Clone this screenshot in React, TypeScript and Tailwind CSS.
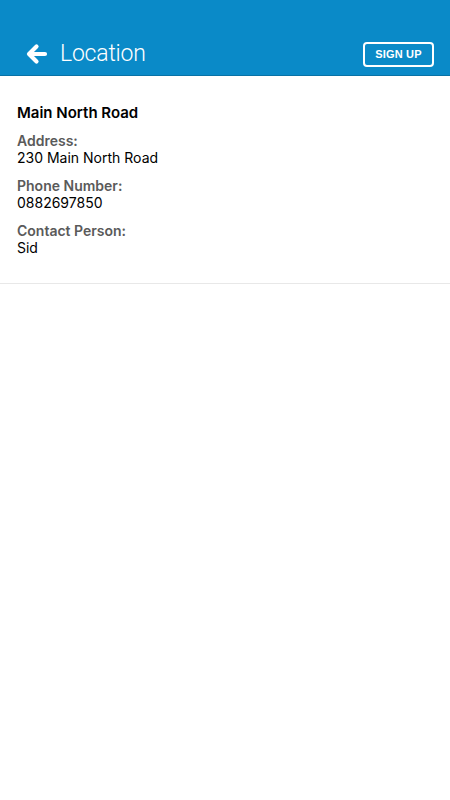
import React from "react";

export default function App() {
  return (
    <div className="w-[450px] h-[800px] bg-white" style={{ fontFamily: 'Inter, "Liberation Sans", Arial, sans-serif' }}>
      <div className="h-[76px] bg-[#0a8ac8] border-b border-[#0872a6] flex items-end pb-[5px] px-[16px]">
        <div className="flex items-center flex-1">
          <svg width="24" height="24" viewBox="0 0 24 24" className="ml-[9px] mr-[11px]">
            <path d="M20 12H5M11.5 4.5L4 12l7.5 7.5" fill="none" stroke="white" strokeWidth="4.2" strokeLinecap="round" strokeLinejoin="round" />
          </svg>
          <span className="text-white text-[23px] leading-[32px] tracking-[-0.2px]" style={{ fontFamily: 'Roboto, "Liberation Sans", sans-serif', fontWeight: 300 }}>Location</span>
        </div>
        <div className="mb-[3px] w-[71px] h-[25px] border-2 border-white rounded-[4px] flex items-center justify-center text-white text-[11px] font-bold tracking-[0.2px]" style={{ fontFamily: '"Liberation Sans", Arial, sans-serif' }}>
          SIGN UP
        </div>
      </div>
      <div className="px-[17px] pt-[28px] pb-[27px] border-b border-[#e8e8e8]">
        <div className="text-[15px] font-semibold text-black leading-[18px]">Main North Road</div>
        <div className="mt-[10px] text-[14px] font-semibold text-[#5a5a5a] leading-[17px]">Address:</div>
        <div className="text-[14px] text-black leading-[17px]">230 Main North Road</div>
        <div className="mt-[11px] text-[14px] font-semibold text-[#5a5a5a] leading-[17px]">Phone Number:</div>
        <div className="text-[14px] text-black leading-[17px]">0882697850</div>
        <div className="mt-[11px] text-[14px] font-semibold text-[#5a5a5a] leading-[17px]">Contact Person:</div>
        <div className="text-[14px] text-black leading-[17px]">Sid</div>
      </div>
    </div>
  );
}
